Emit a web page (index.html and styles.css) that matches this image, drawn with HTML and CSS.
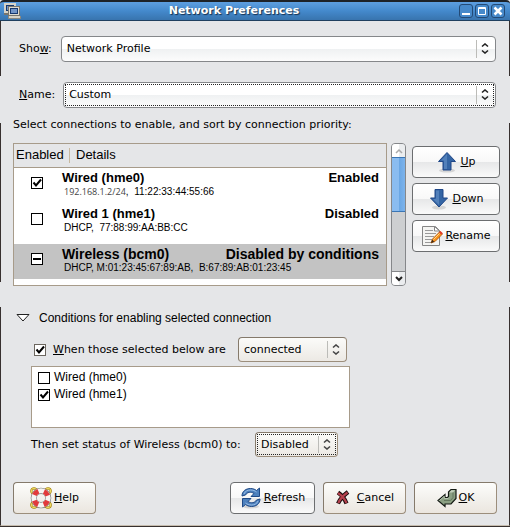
FILE: index.html
```html
<!DOCTYPE html>
<html lang="en">
<head>
<meta charset="utf-8">
<title>Network Preferences</title>
<link rel="stylesheet" href="styles.css">
</head>
<body>
<main class="window">
  <header class="titlebar">
    <svg class="app-icon" width="17" height="16" viewBox="0 0 17 16" shape-rendering="crispEdges" aria-hidden="true">
      <rect x="0" y="0" width="12" height="10" fill="#d5d3c9"/><rect x="2" y="2" width="8" height="6" fill="#16386f"/><rect x="3" y="3" width="6" height="4" fill="#7195c8"/><rect x="0" y="10" width="5" height="2" fill="#77756d"/>
      <rect x="4" y="3" width="12" height="10" fill="#77756d"/><rect x="5" y="4" width="10" height="8" fill="#dddbd1"/><rect x="6" y="5" width="8" height="6" fill="#16386f"/><rect x="7" y="6" width="6" height="4" fill="#7195c8"/>
      <rect x="4" y="13" width="13" height="3" fill="#8a887f"/><rect x="5" y="13" width="11" height="2" fill="#d5d3c9"/>
    </svg>
    <h1 class="title">Network Preferences</h1>
    <div class="window-buttons">
      <button class="wb" aria-label="Minimize"><svg width="12" height="12" viewBox="0 0 12 12"><path d="M2 9h8" stroke="#fff" stroke-width="2"/></svg></button>
      <button class="wb" aria-label="Maximize"><svg width="12" height="12" viewBox="0 0 12 12"><path d="M2.500 2.500h7v7h-7zM2 3.500h8" fill="none" stroke="#fff"/></svg></button>
      <button class="wb" aria-label="Close"><svg width="12" height="12" viewBox="0 0 12 12"><path d="M2.500 2.500l7 7M9.500 2.500l-7 7" stroke="#fff" stroke-width="2.500"/></svg></button>
    </div>
  </header>

  <section class="edge show-row">
    <label for="show">Sho<u>w</u>:</label>
    <span class="combo combo-white grow">
      <select id="show"><option>Network Profile</option></select>
      <svg class="chev" width="8" height="11" viewBox="0 0 8 11"><path d="M1 3.500L4 1l3 2.500M1 7.500L4 10l3-2.500" fill="none" stroke="#222" stroke-width="1.600"/></svg>
    </span>
  </section>

  <section class="name-row">
    <label for="name"><u>N</u>ame:</label>
    <span class="combo combo-white focused grow">
      <select id="name"><option>Custom</option></select>
      <svg class="chev" width="8" height="11" viewBox="0 0 8 11"><path d="M1 3.500L4 1l3 2.500M1 7.500L4 10l3-2.500" fill="none" stroke="#222" stroke-width="1.600"/></svg>
    </span>
  </section>

  <section class="edge connections">
    <p class="hint">Select connections to enable, and sort by connection priority:</p>
    <div class="list-area">
      <div class="table-box">
        <table>
          <colgroup><col class="c-check"><col class="c-gap"><col></colgroup>
          <thead><tr><th colspan="2">Enabled</th><th class="th-details">Details</th></tr></thead>
          <tbody>
            <tr class="r1">
              <td><input type="checkbox" class="check" aria-label="Enable hme0" checked></td>
              <td colspan="2"><div class="line"><b>Wired (hme0)</b><b>Enabled</b></div><div class="sub"><span class="ip">192.168.1.2/24</span>,&nbsp; 11:22:33:44:55:66</div></td>
            </tr>
            <tr class="r2">
              <td><input type="checkbox" class="check" aria-label="Enable hme1"></td>
              <td colspan="2"><div class="line"><b>Wired 1 (hme1)</b><b>Disabled</b></div><div class="sub">DHCP,&nbsp; 77:88:99:AA:BB:CC</div></td>
            </tr>
            <tr class="r3 selected">
              <td><input type="checkbox" class="check mixed" aria-label="Enable bcm0"></td>
              <td colspan="2"><div class="line"><b>Wireless (bcm0)</b><b>Disabled by conditions</b></div><div class="sub">DHCP, M:01:23:45:67:89:AB,&nbsp; B:67:89:AB:01:23:45</div></td>
            </tr>
          </tbody>
        </table>
      </div>
      <div class="scrollbar">
        <button class="sb-btn" aria-label="Scroll up" disabled><svg width="8" height="6" viewBox="0 0 8 6"><path d="M1 5l3-3 3 3" fill="none" stroke="#aaa" stroke-width="1.500"/></svg></button>
        <div class="thumb"></div>
        <div class="track"></div>
        <button class="sb-btn" aria-label="Scroll down"><svg width="8" height="6" viewBox="0 0 8 6"><path d="M1 1l3 3 3-3" fill="none" stroke="#222" stroke-width="2"/></svg></button>
      </div>
      <div class="side">
        <button class="btn btn-cool">
          <svg width="22" height="22" viewBox="0 0 22 22"><ellipse cx="11" cy="19.500" rx="8" ry="2" fill="#000" opacity=".12"/><path d="M11 1.500L19.500 10.500H15v8.500H7v-8.500H2.500z" fill="#3465a4" stroke="#1f4788"/><path d="M11 3v15H8V9.500H5z" fill="#6f9bd0" opacity=".5"/></svg><span><u>U</u>p</span></button>
        <button class="btn btn-cool">
          <svg width="22" height="22" viewBox="0 0 22 22"><ellipse cx="11" cy="19.500" rx="7" ry="2" fill="#000" opacity=".12"/><path d="M7 1.500h8V10h4.500L11 19 2.500 10H7z" fill="#3465a4" stroke="#1f4788"/><path d="M8 2.500h3V17l-6-6h3z" fill="#6f9bd0" opacity=".5"/></svg><span><u>D</u>own</span></button>
        <button class="btn btn-cool">
          <svg width="22" height="22" viewBox="0 0 22 22"><path d="M1.500 1.500h13l4 4v15h-17z" fill="#f4f4f2" stroke="#858585"/><path d="M13.500 1.500v4.500h5z" fill="#fff" stroke="#858585"/><path d="M4 5.500h8M4 8.500h11M4 11.500h9M4 14.500h7M4 17.500h6" stroke="#999"/><path d="M10 18l1.500-4 7.500-7.500 2.500 2.500-7.500 7.500z" fill="#f9941c" stroke="#a94e00" stroke-width=".8"/><path d="M18 7.500l1.500-1.500 2.300 2.300-1.500 1.500z" fill="#e33b2b"/><path d="M10 18l1.200-3.200 2 2z" fill="#3b2a18"/><path d="M12.500 14.500L18.500 8.500" stroke="#ffd68a"/></svg><span><u>R</u>ename</span></button>
      </div>
    </div>
  </section>

  <div class="gap"></div>

  <section class="edge conditions">
    <div class="expander">
      <svg width="14" height="8" viewBox="0 0 14 8"><path d="M1 .5h12L7 7z" fill="#fff" stroke="#222"/></svg>
      <span>Conditions for enabling selected connection</span>
    </div>
    <div class="when">
      <input type="checkbox" class="check soft" id="when" checked>
      <label for="when"><u>W</u>hen those selected below are</label>
      <span class="combo combo-warm w-connected">
        <select aria-label="Connection state"><option>connected</option></select>
        <svg class="chev" width="8" height="11" viewBox="0 0 8 11"><path d="M1 3.500L4 1l3 2.500M1 7.500L4 10l3-2.500" fill="none" stroke="#444" stroke-width="1.600"/></svg>
      </span>
    </div>
    <div class="targets">
      <label><input type="checkbox" class="check">Wired (hme0)</label>
      <label><input type="checkbox" class="check" checked>Wired (hme1)</label>
    </div>
    <div class="then">
      <label for="status">Then set status of Wireless (bcm0) to:</label>
      <span class="combo combo-warm focused w-status">
        <select id="status"><option>Disabled</option></select>
        <svg class="chev" width="8" height="11" viewBox="0 0 8 11"><path d="M1 3.500L4 1l3 2.500M1 7.500L4 10l3-2.500" fill="none" stroke="#444" stroke-width="1.600"/></svg>
      </span>
    </div>
    <footer class="actions">
      <button class="btn btn-warm help">
        <svg width="22" height="22" viewBox="0 0 22 22"><g fill="none" stroke="#a8860c" stroke-width="2.200"><circle cx="4" cy="4" r="2.700"/><circle cx="18" cy="4" r="2.700"/><circle cx="4" cy="18" r="2.700"/><circle cx="18" cy="18" r="2.700"/></g><g fill="none" stroke="#f0dc62" stroke-width="1"><circle cx="4" cy="4" r="2.700"/><circle cx="18" cy="4" r="2.700"/><circle cx="4" cy="18" r="2.700"/><circle cx="18" cy="18" r="2.700"/></g><circle cx="11" cy="11" r="7.200" fill="none" stroke="#777" stroke-width="6.200"/><circle cx="11" cy="11" r="7.200" fill="none" stroke="#f5f5f3" stroke-width="5"/><circle cx="11" cy="11" r="7.200" fill="none" stroke="#e13a3c" stroke-width="5" stroke-dasharray="5.655 5.655" stroke-dashoffset="-2.830"/></svg><span><u>H</u>elp</span></button>
      <button class="btn btn-cool refresh">
        <svg width="22" height="22" viewBox="0 0 22 22"><ellipse cx="11" cy="19.500" rx="8" ry="2" fill="#000" opacity=".12"/><g fill="#4c80bd" stroke="#204a87"><path d="M2 9C2 4 6 1.500 10.500 1.500c2.500 0 4.500.8 6 2l3-2.500v8.500H11l3-3C11 4.500 7 5 5.500 8z"/><path d="M20 12c0 5-4 7.500-8.500 7.500-2.500 0-4.500-.8-6-2l-3 2.500v-8.500H11l-3 3c3 2 7 1.500 8.500-1.500z"/></g><path d="M4 7C5 4 8 3 10.500 3c2.500 0 4.500.8 6 2M18 14c-1 3-4 4-6.500 4-2.500 0-4.500-.8-6-2" fill="none" stroke="#9cbfe6"/></svg><span><u>R</u>efresh</span></button>
      <button class="btn btn-warm cancel">
        <svg width="16" height="16" viewBox="0 0 16 16"><path d="M3 2.500c3 2 7 7 8.500 11M13 2C9 5 5 9 3 13.500" fill="none" stroke="#1a0b0c" stroke-width="4.200"/><path d="M3 3c3 2 7 6.500 8.500 10M12.500 2.500C9 5 5 9 3.300 13" fill="none" stroke="#b5414d" stroke-width="2.200"/></svg><span><u>C</u>ancel</span></button>
      <button class="btn btn-warm ok">
        <svg width="20" height="20" viewBox="0 0 20 20"><path d="M11.500 4l2.500-2.500h5v9l-5 5.500H8v2.500L1 12.500 8 6.500v3h2.500l1-1z" fill="#8a9f82" stroke="#141a14" stroke-width="1.200"/><path d="M12.300 4.300L14.300 2.300h3.700L16 4.500h-3.500z" fill="#c3d0bc"/><path d="M2.500 12.500L7.300 8.300v2.200h3.800l1-1" fill="none" stroke="#b5c4ae"/><path d="M16 4.500v5l-2.500 3H7" fill="none" stroke="#62765c"/></svg><span><u>O</u>K</span></button>
    </footer>
  </section>
</main>
</body>
</html>
```
FILE: styles.css
```css
* { box-sizing: border-box; }

body {
  margin: 0;
  background: #fff;
  color: #000;
  font: 11px/16px "DejaVu Sans", sans-serif;
}

button, select, input { margin: 0; font: inherit; color: inherit; }

.window { background: #e5e6e8; border-bottom: 1px solid #37302f; }

/* title bar */
.titlebar {
  display: flex;
  align-items: center;
  height: 21px;
  padding: 0 5px 0 4px;
  border-top: 2px solid #1d2228;
  border-bottom: 1px solid #20405f;
  border-radius: 4px 4px 0 0;
  background: linear-gradient(#5d9fe0, #4489cc 50%, #3874ae);
}
.title {
  flex: 1;
  margin: 0;
  padding-right: 12px;
  text-align: center;
  font-size: 11px;
  line-height: 18px;
  color: #fff;
  text-shadow: 1px 1px 1px #16304d;
}
.window-buttons { display: flex; gap: 2px; }
.wb {
  display: grid;
  place-items: center;
  width: 14px;
  height: 14px;
  padding: 0;
  border: 1px solid #234a75;
  border-radius: 3px;
  background: #4689ca;
}

.edge { border: 1px solid #37302f; border-width: 0 1px; }

/* combo boxes */
.combo { position: relative; display: flex; }
.combo select {
  appearance: none;
  width: 100%;
  height: 26px;
  padding: 0 20px 0 5px;
  border: 1px solid #85878a;
  border-radius: 4px;
}
.combo-white select { background: linear-gradient(#fff 50%, #eff1f2 50%, #fcfcfc); }
.combo-warm select {
  height: 25px;
  border-color: #857a6b #9c8e7c #9c8e7c #857a6b;
  background: linear-gradient(#fbfbf9, #ece9e4);
}
.combo::before {
  content: "";
  position: absolute;
  top: 4px;
  bottom: 4px;
  right: 19px;
  width: 1px;
  background: #bcbcb8;
}
.chev { position: absolute; right: 7px; top: 50%; margin-top: -6px; pointer-events: none; }
.focused::after {
  content: "";
  position: absolute;
  inset: 2px;
  border: 1px dotted #222;
  pointer-events: none;
}
.grow { flex: 1; }

.show-row, .name-row { display: flex; align-items: center; }
.show-row { gap: 9px; height: 55px; padding: 0 13px 0 18px; }
.name-row { gap: 8px; height: 47px; padding: 0 14px 10px 19px; }
.name-row select { padding-left: 5px; }

/* check boxes */
.check {
  appearance: none;
  display: block;
  width: 12px;
  height: 12px;
  border: 1px solid #000;
  background: #fff center / 10px 10px no-repeat;
}
.check:checked { background-image: url("data:image/svg+xml,%3Csvg xmlns='http://www.w3.org/2000/svg' viewBox='0 0 10 10'%3E%3Cpath d='M1.500 4.500L4 7.500 9 1.500' fill='none' stroke='%23000' stroke-width='2'/%3E%3C/svg%3E"); }
.mixed { background-image: linear-gradient(#000, #000); background-size: 8px 2px; }
.soft { border-color: #6b665e; }

/* connections */
.connections { height: 159px; padding: 0 9px 0 12px; }
.hint { margin: 0; padding-bottom: 10px; line-height: 4px; }
.list-area { display: flex; align-items: flex-start; padding-top: 6px; }
.table-box {
  flex: 1;
  height: 143px;
  border: 1px solid #a79b8a;
  background: #fff;
  font-family: "Liberation Sans", Arial, sans-serif;
}
table { width: 100%; table-layout: fixed; border-collapse: collapse; }
.c-check { width: 48px; }
.c-gap { width: 7px; }
th {
  height: 23px;
  padding: 0 2px;
  border-bottom: 1px solid #a79b8a;
  background: #e5e6e8;
  text-align: left;
  font-size: 13px;
  font-weight: 400;
}
th.th-details {
  padding-left: 7px;
  background: linear-gradient(#c8b9a0, #c8b9a0) 0 4px / 1px 15px no-repeat #e5e6e8;
}
td { padding: 0; vertical-align: top; font-size: 13px; }
td .check { margin: 9px 0 0 17px; }
.r1 { height: 37px; }
.r2 { height: 40px; }
.r3 { height: 35px; }
.line { display: flex; justify-content: space-between; padding: 2px 7px 0 0; }
.r3 .line { font-size: 14px; }
.sub { padding-left: 2px; font-size: 10px; line-height: 12px; }
.ip { font-family: "Open Sans", sans-serif; font-size: 9px; color: #444; }
.selected { background: #c3c3c3; }

.scrollbar {
  display: flex;
  flex-direction: column;
  width: 15px;
  height: 143px;
  margin-left: 4px;
  border: 1px solid #85878a;
  border-radius: 4px;
  background: #cdcfd1;
  overflow: hidden;
}
.sb-btn {
  display: grid;
  place-items: center;
  height: 13px;
  padding: 0;
  border: 0;
  background: linear-gradient(90deg, #fff 50%, #ebedef 50%);
}
.thumb {
  height: 55px;
  border: 1px solid #3a76b5;
  border-width: 1px 0;
  background: linear-gradient(90deg, #8abcf0 50%, #68a5e3 50%, #7cb3ec);
}
.track { flex: 1; border-bottom: 1px solid #85878a; }

.side { display: flex; flex-direction: column; gap: 5px; width: 88px; margin: 3px 0 0 6px; }
.btn {
  display: flex;
  align-items: center;
  justify-content: center;
  gap: 2px;
  height: 32px;
  padding: 0;
  border: 1px solid #6c6e70;
  border-radius: 4px;
}
.btn-cool { background: linear-gradient(#fff, #f8f8f8 50%, #e6e7e8 50%, #fafafa); }
.btn-warm {
  border-color: #857a6b #9c8e7c #9c8e7c #857a6b;
  background: linear-gradient(#fdfdfb, #f3f1ed 50%, #ebe6df);
}

.gap { height: 25px; }

/* conditions */
.conditions { padding: 3px 12px 11px 12px; border-bottom: 1px solid #c6bcae; }
.expander {
  display: flex;
  align-items: center;
  gap: 9px;
  padding-left: 3px;
  font: 12px/16px "Liberation Sans", Arial, sans-serif;
}
.when, .then { display: flex; align-items: center; }
.when { padding: 11px 0 4px 21px; }
.when label { margin-left: 7px; flex: 0 0 185px; }
.w-connected { flex: 0 0 109px; }
.targets {
  width: 319px;
  height: 62px;
  margin-left: 18px;
  padding: 2px 6px;
  border: 1px solid #a79b8a;
  background: #fff;
  font: 12px/17px "Liberation Sans", Arial, sans-serif;
}
.targets label { display: flex; align-items: center; gap: 4px; }
.then { padding: 4px 0 0 18px; }
.then label { flex: 0 0 224px; }
.w-status { flex: 0 0 83px; }

.actions { display: flex; gap: 8px; margin-top: 25px; }
.help, .cancel, .ok { flex: 0 0 83px; }
.refresh { flex: 0 0 85px; margin-left: auto; }
.cancel { gap: 6px; }
```
